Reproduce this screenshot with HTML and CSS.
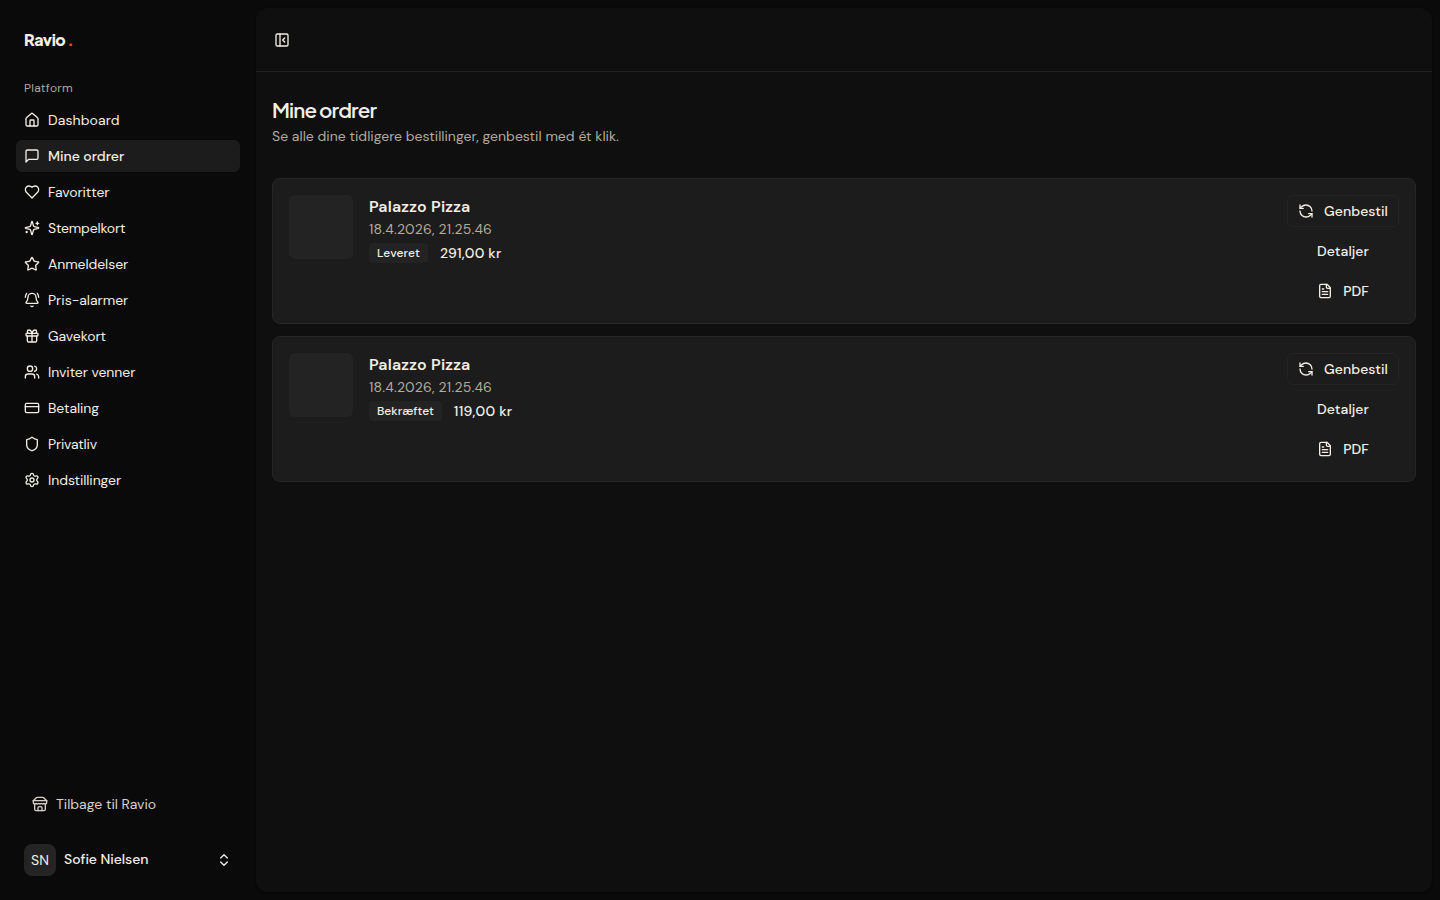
FILE: index.html
```html
<!DOCTYPE html>
<html lang="da">
<head>
<meta charset="utf-8">
<title>Mine ordrer</title>
<link rel="stylesheet" href="styles.css">
</head>
<body>
<aside class="sidebar">
  <div class="brand"><span class="brand-name">Ravio</span><span class="brand-dot">.</span></div>
  <div class="group-label">Platform</div>
  <nav class="menu">
    <a class="item loose"><svg class="icon" viewBox="0 0 24 24"><path d="M15 21v-8a1 1 0 0 0-1-1h-4a1 1 0 0 0-1 1v8"/><path d="M3 10a2 2 0 0 1 .709-1.528l7-6a2 2 0 0 1 2.582 0l7 6A2 2 0 0 1 21 10v9a2 2 0 0 1-2 2H5a2 2 0 0 1-2-2z"/></svg><span>Dashboard</span></a>
    <a class="item active normal"><svg class="icon" viewBox="0 0 24 24"><path d="M21 15a2 2 0 0 1-2 2H7l-4 4V5a2 2 0 0 1 2-2h14a2 2 0 0 1 2 2z"/></svg><span>Mine ordrer</span></a>
    <a class="item"><svg class="icon" viewBox="0 0 24 24"><path d="M19 14c1.490-1.460 3-3.210 3-5.500A5.500 5.500 0 0 0 16.500 3c-1.760 0-3 .500-4.500 2-1.500-1.500-2.740-2-4.500-2A5.500 5.500 0 0 0 2 8.500c0 2.300 1.500 4.050 3 5.500l7 7Z"/></svg><span>Favoritter</span></a>
    <a class="item tight"><svg class="icon" viewBox="0 0 24 24"><path d="M9.937 15.500A2 2 0 0 0 8.500 14.063l-6.135-1.582a.5.5 0 0 1 0-.962L8.500 9.936A2 2 0 0 0 9.937 8.500l1.582-6.135a.5.5 0 0 1 .963 0L14.063 8.500A2 2 0 0 0 15.500 9.937l6.135 1.581a.5.5 0 0 1 0 .964L15.500 14.063a2 2 0 0 0-1.437 1.437l-1.582 6.135a.5.5 0 0 1-.963 0z"/><path d="M20 3v4M22 5h-4M4 17v2M5 18H3"/></svg><span>Stempelkort</span></a>
    <a class="item"><svg class="icon" viewBox="0 0 24 24"><path d="M11.525 2.295a.53.53 0 0 1 .95 0l2.310 4.679a2.123 2.123 0 0 0 1.595 1.160l5.166.756a.53.53 0 0 1 .294.904l-3.736 3.638a2.123 2.123 0 0 0-.611 1.878l.882 5.140a.53.53 0 0 1-.771.560l-4.618-2.428a2.122 2.122 0 0 0-1.973 0L6.396 21.010a.53.53 0 0 1-.770-.560l.881-5.139a2.122 2.122 0 0 0-.611-1.879L2.160 9.795a.53.53 0 0 1 .294-.906l5.165-.755a2.122 2.122 0 0 0 1.597-1.160z"/></svg><span>Anmeldelser</span></a>
    <a class="item normal"><svg class="icon" viewBox="0 0 24 24"><path d="M10.268 21a2 2 0 0 0 3.464 0M22 8c0-2.300-.800-4.300-2-6M3.262 15.326A1 1 0 0 0 4 17h16a1 1 0 0 0 .740-1.673C19.410 13.956 18 12.499 18 8A6 6 0 0 0 6 8c0 4.499-1.411 5.956-2.738 7.326M4 2C2.800 3.700 2 5.700 2 8"/></svg><span>Pris-alarmer</span></a>
    <a class="item"><svg class="icon" viewBox="0 0 24 24"><rect x="3" y="8" width="18" height="4" rx="1"/><path d="M12 8v13M19 12v7a2 2 0 0 1-2 2H7a2 2 0 0 1-2-2v-7M7.500 8a2.500 2.500 0 0 1 0-5A4.800 8 0 0 1 12 8a4.800 8 0 0 1 4.500-5 2.500 2.500 0 0 1 0 5"/></svg><span>Gavekort</span></a>
    <a class="item"><svg class="icon" viewBox="0 0 24 24"><path d="M16 21v-2a4 4 0 0 0-4-4H6a4 4 0 0 0-4 4v2M16 3.128a4 4 0 0 1 0 7.744M22 21v-2a4 4 0 0 0-3-3.870"/><circle cx="9" cy="7" r="4"/></svg><span>Inviter venner</span></a>
    <a class="item"><svg class="icon" viewBox="0 0 24 24"><rect x="2" y="5" width="20" height="14" rx="2"/><path d="M2 10h20"/></svg><span>Betaling</span></a>
    <a class="item tight"><svg class="icon" viewBox="0 0 24 24"><path d="M20 13c0 5-3.500 7.500-7.660 8.950a1 1 0 0 1-.670-.010C7.500 20.500 4 18 4 13V6a1 1 0 0 1 1-1c2 0 4.500-1.200 6.240-2.720a1.170 1.170 0 0 1 1.520 0C14.510 3.810 17 5 19 5a1 1 0 0 1 1 1z"/></svg><span>Privatliv</span></a>
    <a class="item"><svg class="icon" viewBox="0 0 24 24"><path d="M9.671 4.136a2.340 2.340 0 0 1 4.659 0 2.340 2.340 0 0 0 3.319 1.915 2.340 2.340 0 0 1 2.330 4.033 2.340 2.340 0 0 0 0 3.831 2.340 2.340 0 0 1-2.330 4.033 2.340 2.340 0 0 0-3.319 1.915 2.340 2.340 0 0 1-4.659 0 2.340 2.340 0 0 0-3.320-1.915 2.340 2.340 0 0 1-2.330-4.033 2.340 2.340 0 0 0 0-3.831A2.340 2.340 0 0 1 6.350 6.051a2.340 2.340 0 0 0 3.319-1.915"/><circle cx="12" cy="12" r="3"/></svg><span>Indstillinger</span></a>
  </nav>
  <a class="back"><svg class="icon" viewBox="0 0 24 24"><path d="m2 7 4.410-4.410A2 2 0 0 1 7.830 2h8.340a2 2 0 0 1 1.420.590L22 7"/><path d="M4 12v8a2 2 0 0 0 2 2h12a2 2 0 0 0 2-2v-8"/><path d="M15 22v-4a2 2 0 0 0-2-2h-2a2 2 0 0 0-2 2v4M2 7h20"/><path d="M22 7v3a2 2 0 0 1-2 2a2.700 2.700 0 0 1-1.590-.630.700.700 0 0 0-.820 0A2.700 2.700 0 0 1 16 12a2.700 2.700 0 0 1-1.590-.630.700.700 0 0 0-.820 0A2.700 2.700 0 0 1 12 12a2.700 2.700 0 0 1-1.590-.630.700.700 0 0 0-.820 0A2.700 2.700 0 0 1 8 12a2.700 2.700 0 0 1-1.590-.630.700.700 0 0 0-.820 0A2.700 2.700 0 0 1 4 12a2 2 0 0 1-2-2V7"/></svg><span>Tilbage til Ravio</span></a>
  <div class="user"><span class="avatar">SN</span><span class="user-name">Sofie Nielsen</span><svg class="icon" viewBox="0 0 24 24"><path d="m7 15 5 5 5-5M7 9l5-5 5 5"/></svg></div>
</aside>
<main class="panel">
  <header class="topbar"><svg class="icon" viewBox="0 0 24 24"><rect x="3" y="3" width="18" height="18" rx="2"/><path d="M9 3v18M16 15l-3-3 3-3"/></svg></header>
  <div class="content">
    <h1 class="title">Mine ordrer</h1>
    <p class="lead">Se alle dine tidligere bestillinger, genbestil med ét klik.</p>
    <div class="orders">
      <article class="card">
        <div class="thumb"></div>
        <div class="info">
          <div class="name">Palazzo Pizza</div>
          <div class="date">18.4.2026, 21.25.46</div>
          <div class="meta"><span class="badge delivered">Leveret</span><span class="price">291,00 kr</span></div>
        </div>
        <div class="actions">
          <a class="btn outline"><svg class="icon" viewBox="0 0 24 24"><path d="M21 12a9 9 0 0 0-9-9 9.750 9.750 0 0 0-6.740 2.740L3 8"/><path d="M3 3v5h5M3 12a9 9 0 0 0 9 9 9.750 9.750 0 0 0 6.740-2.740L21 16"/><path d="M16 16h5v5"/></svg><span>Genbestil</span></a>
          <a class="btn"><span>Detaljer</span></a>
          <a class="btn"><svg class="icon" viewBox="0 0 24 24"><path d="M15 2H6a2 2 0 0 0-2 2v16a2 2 0 0 0 2 2h12a2 2 0 0 0 2-2V7Z"/><path d="M14 2v4a2 2 0 0 0 2 2h4M10 9H8M16 13H8M16 17H8"/></svg><span>PDF</span></a>
        </div>
      </article>
      <article class="card">
        <div class="thumb"></div>
        <div class="info">
          <div class="name">Palazzo Pizza</div>
          <div class="date">18.4.2026, 21.25.46</div>
          <div class="meta"><span class="badge">Bekræftet</span><span class="price">119,00 kr</span></div>
        </div>
        <div class="actions">
          <a class="btn outline"><svg class="icon" viewBox="0 0 24 24"><path d="M21 12a9 9 0 0 0-9-9 9.750 9.750 0 0 0-6.740 2.740L3 8"/><path d="M3 3v5h5M3 12a9 9 0 0 0 9 9 9.750 9.750 0 0 0 6.740-2.740L21 16"/><path d="M16 16h5v5"/></svg><span>Genbestil</span></a>
          <a class="btn"><span>Detaljer</span></a>
          <a class="btn"><svg class="icon" viewBox="0 0 24 24"><path d="M15 2H6a2 2 0 0 0-2 2v16a2 2 0 0 0 2 2h12a2 2 0 0 0 2-2V7Z"/><path d="M14 2v4a2 2 0 0 0 2 2h4M10 9H8M16 13H8M16 17H8"/></svg><span>PDF</span></a>
        </div>
      </article>
    </div>
  </div>
</main>
</body>
</html>
```
FILE: styles.css
```css
* { box-sizing: border-box; }
body {
  margin: 0; height: 100vh; display: flex; overflow: hidden;
  background: #0a0a0a; color: #f3eee3;
  font: 14px/20px "DM Sans", Inter, sans-serif;
}
.icon { width: 16px; height: 16px; flex: none; fill: none; stroke: currentColor; stroke-width: 2; stroke-linecap: round; stroke-linejoin: round; }
.sidebar { width: 256px; padding: 16px; display: flex; flex-direction: column; }
.brand { height: 48px; padding: 0 8px; display: flex; align-items: center; gap: 2px; font-family: "Plus Jakarta Sans", "DM Sans", sans-serif; font-size: 16px; line-height: 24px; font-weight: 800; letter-spacing: -0.5px; }
.brand-dot { color: #ff4a1c; }
.group-label { height: 32px; margin-top: 8px; padding: 0 8px; font-size: 12px; line-height: 32px; letter-spacing: 0.28px; color: #b0a99b; }
.menu { display: flex; flex-direction: column; gap: 4px; }
.item { height: 32px; padding: 0 8px; display: flex; align-items: center; gap: 8px; border-radius: 6px; letter-spacing: -0.07px; }
.active { background: #1c1c1c; font-weight: 500; }
.loose { letter-spacing: 0.1px; }
.normal { letter-spacing: -0.01px; }
.tight { letter-spacing: -0.18px; }
.back { margin-top: auto; height: 32px; padding: 0 16px; display: flex; align-items: center; gap: 8px; color: #d6d1c8; }
.user { height: 48px; margin-top: 16px; padding: 0 8px; display: flex; align-items: center; gap: 8px; font-weight: 500; }
.avatar { width: 32px; height: 32px; border-radius: 8px; background: #242424; text-align: center; line-height: 32px; font-weight: 400; }
.user-name { flex: 1; padding-bottom: 2px; letter-spacing: -0.04px; }
.panel { flex: 1; margin: 8px 8px 8px 0; border-radius: 12px; background: #0f0f0f; box-shadow: 0 1px 3px #0006; }
.topbar { height: 64px; padding: 0 18px; display: flex; align-items: center; border-bottom: 1px solid #222; }
.content { padding: 24px 16px; }
.title { margin: 0; padding-bottom: 2px; font-family: "Plus Jakarta Sans", "DM Sans", sans-serif; font-size: 20.5px; line-height: 28px; font-weight: 600; letter-spacing: -0.82px; }
.lead { margin: 0; color: #b3ab9c; letter-spacing: 0.02px; }
.orders { margin-top: 32px; display: flex; flex-direction: column; gap: 12px; }
.card { height: 146px; padding: 16px; display: flex; gap: 16px; background: #1c1c1c; border: 1px solid #262626; border-radius: 8px; }
.thumb { width: 64px; height: 64px; border-radius: 6px; background: #232323; }
.info { flex: 1; }
.name { font-size: 16px; line-height: 24px; font-weight: 600; letter-spacing: 0.18px; }
.date { color: #b3ab9c; letter-spacing: 0.2px; }
.meta { margin-top: 4px; display: flex; align-items: center; gap: 12px; font-weight: 500; }
.badge { height: 20px; padding: 0 8px; border-radius: 4px; background: #232323; font-size: 12px; line-height: 20px; }
.delivered { letter-spacing: 0.12px; }
.price { letter-spacing: 0.22px; }
.actions { display: flex; flex-direction: column; align-items: stretch; gap: 8px; width: 112px; }
.btn { height: 32px; display: flex; align-items: center; justify-content: center; gap: 10px; font-weight: 500; letter-spacing: 0.05px; border: 1px solid transparent; border-radius: 6px; }
.outline { border-color: #232323; }
```
